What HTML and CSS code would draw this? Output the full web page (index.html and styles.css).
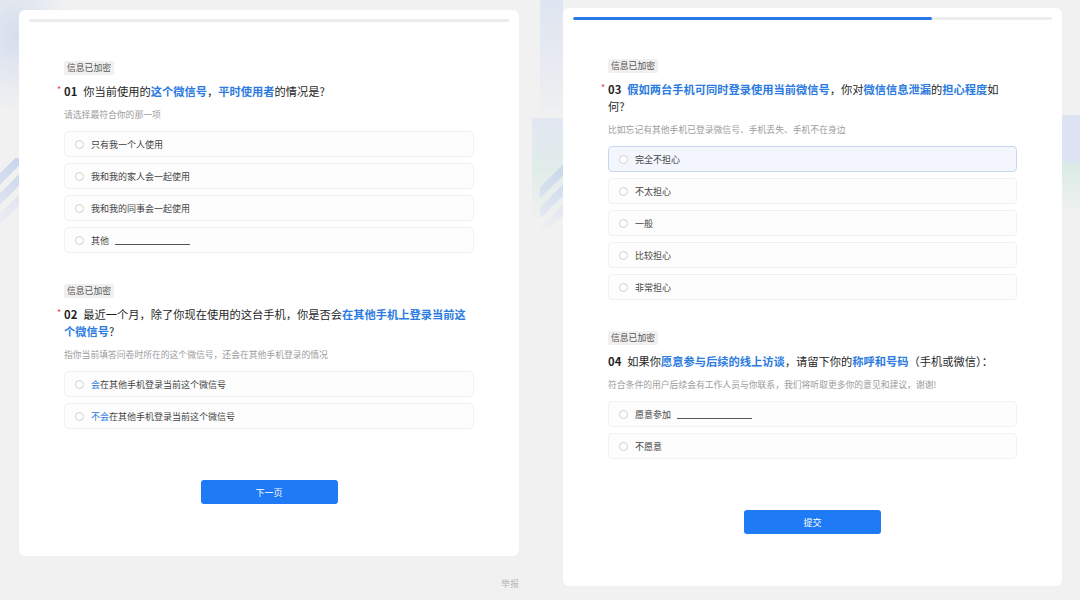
FILE: index.html
```html
<!DOCTYPE html>
<html lang="zh-CN">
<head>
<meta charset="utf-8">
<title>问卷</title>
<link rel="stylesheet" href="styles.css">
</head>
<body>
<div class="screen">
  <section class="panel panel-left">
    <div class="decor decor-glow"></div>
    <div class="decor decor-stripes decor-stripes-left"><i></i><i></i><i></i></div>
    <div class="card">
      <div class="progress"><div class="progress-fill progress-fill-0"></div></div>
      <div class="content">
        <div class="question">
          <span class="tag">信息已加密</span>
          <div class="title"><span class="star">*</span><span class="num">01</span>你当前使用的<b class="hl">这个微信号</b>，<b class="hl">平时使用者</b>的情况是?</div>
          <div class="desc">请选择最符合你的那一项</div>
          <div class="options">
            <div class="option"><span class="radio"></span><span>只有我一个人使用</span></div>
            <div class="option"><span class="radio"></span><span>我和我的家人会一起使用</span></div>
            <div class="option"><span class="radio"></span><span>我和我的同事会一起使用</span></div>
            <div class="option"><span class="radio"></span><span>其他</span><span class="fill"></span></div>
          </div>
        </div>
        <div class="question">
          <span class="tag">信息已加密</span>
          <div class="title"><span class="star">*</span><span class="num">02</span>最近一个月，除了你现在使用的这台手机，你是否会<b class="hl">在其他手机上登录当前这个微信号</b>?</div>
          <div class="desc">指你当前填答问卷时所在的这个微信号，还会在其他手机登录的情况</div>
          <div class="options">
            <div class="option"><span class="radio"></span><span><span class="hl-soft">会</span>在其他手机登录当前这个微信号</span></div>
            <div class="option"><span class="radio"></span><span><span class="hl-soft">不会</span>在其他手机登录当前这个微信号</span></div>
          </div>
        </div>
        <div class="actions"><button class="btn">下一页</button></div>
      </div>
    </div>
    <div class="report">举报</div>
  </section>

  <section class="panel panel-right">
    <div class="decor decor-column"></div>
    <div class="decor decor-block"></div>
    <div class="decor decor-stripes decor-stripes-mid"><i></i><i></i><i></i></div>
    <div class="decor decor-edge"></div>
    <div class="card card-right">
      <div class="progress"><div class="progress-fill progress-fill-75"></div></div>
      <div class="content">
        <div class="question">
          <span class="tag">信息已加密</span>
          <div class="title"><span class="star">*</span><span class="num">03</span><b class="hl">假如两台手机可同时登录使用当前微信号</b>，你对<b class="hl">微信信息泄漏</b>的<b class="hl">担心程度</b>如何?</div>
          <div class="desc">比如忘记有其他手机已登录微信号、手机丢失、手机不在身边</div>
          <div class="options">
            <div class="option option-active"><span class="radio"></span><span>完全不担心</span></div>
            <div class="option"><span class="radio"></span><span>不太担心</span></div>
            <div class="option"><span class="radio"></span><span>一般</span></div>
            <div class="option"><span class="radio"></span><span>比较担心</span></div>
            <div class="option"><span class="radio"></span><span>非常担心</span></div>
          </div>
        </div>
        <div class="question">
          <span class="tag">信息已加密</span>
          <div class="title"><span class="num">04</span>如果你<b class="hl">愿意参与后续的线上访谈</b>，请留下你的<b class="hl">称呼和号码</b>（手机或微信）：</div>
          <div class="desc">符合条件的用户后续会有工作人员与你联系，我们将听取更多你的意见和建议，谢谢!</div>
          <div class="options">
            <div class="option"><span class="radio"></span><span>愿意参加</span><span class="fill"></span></div>
            <div class="option"><span class="radio"></span><span>不愿意</span></div>
          </div>
        </div>
        <div class="actions"><button class="btn">提交</button></div>
      </div>
    </div>
  </section>
</div>
</body>
</html>
```

FILE: styles.css
```css
* { box-sizing: border-box; }

html, body {
  margin: 0;
  padding: 0;
}

body {
  width: 1080px;
  height: 600px;
  overflow: hidden;
  background: #f1f1f1;
  font-family: "Noto Sans CJK SC", "Noto Sans", sans-serif;
  color: #1f1f1f;
}

.screen {
  display: flex;
  height: 600px;
}

.panel {
  position: relative;
  height: 600px;
}

.panel-left {
  width: 540px;
  padding: 10px 0 0 19px;
}

.panel-right {
  flex: 1;
  padding: 8px 0 0 23px;
}

/* background decoration */
.decor {
  position: absolute;
  pointer-events: none;
  z-index: 0;
}

.decor-glow {
  left: -40px;
  top: -40px;
  width: 110px;
  height: 150px;
  border-radius: 50%;
  background: radial-gradient(ellipse at center, rgba(205, 216, 236, 0.75) 0%, rgba(220, 228, 240, 0.4) 50%, rgba(241, 241, 241, 0) 75%);
}

.decor-stripes {
  width: 40px;
  height: 70px;
  overflow: hidden;
}

.decor-stripes i {
  position: absolute;
  width: 8px;
  height: 90px;
  border-radius: 4px;
  transform: rotate(45deg);
  background: linear-gradient(180deg, rgba(190, 206, 236, 0.9), rgba(220, 228, 244, 0.3));
}

.decor-stripes i:nth-child(1) { left: 6px; top: -20px; }
.decor-stripes i:nth-child(2) { left: 18px; top: -12px; }
.decor-stripes i:nth-child(3) { left: 30px; top: -4px; opacity: 0.6; }

.decor-stripes-left {
  left: -14px;
  top: 158px;
}

.decor-stripes-mid {
  left: 0px;
  top: 158px;
}

.decor-column {
  left: 0;
  top: 0;
  width: 23px;
  height: 110px;
  background: linear-gradient(180deg, rgba(218, 226, 240, 0.8), rgba(230, 234, 242, 0.3));
}

.decor-block {
  left: -8px;
  top: 118px;
  width: 31px;
  height: 100px;
  background: linear-gradient(180deg, rgba(222, 228, 242, 0.8) 0%, rgba(218, 234, 230, 0.7) 50%, rgba(236, 240, 240, 0.3) 100%);
}

.decor-edge {
  left: 522px;
  top: 115px;
  width: 18px;
  height: 95px;
  background: linear-gradient(180deg, rgba(221, 227, 244, 0.95) 0%, rgba(221, 227, 244, 0.95) 48%, rgba(216, 234, 230, 0.9) 52%, rgba(236, 240, 240, 0.4) 100%);
}

/* card */
.card {
  position: relative;
  z-index: 1;
  width: 500px;
  background: #ffffff;
  border-radius: 6px;
  padding: 9px 10px 52px;
}

.card-right {
  width: 499px;
}

.progress {
  height: 3px;
  background: #ececec;
  border-radius: 2px;
  overflow: hidden;
}

.progress-fill {
  height: 3px;
  background: #2a78e4;
  border-radius: 2px;
}

.progress-fill-0 { width: 0; }
.progress-fill-75 { width: 75%; }

.content {
  padding: 39px 35px 0;
}

.question + .question {
  margin-top: 31px;
}

.tag {
  display: block;
  width: fit-content;
  height: 14px;
  line-height: 14px;
  padding: 0 3px;
  font-size: 8.8px;
  color: #555555;
  background: #f0f0f0;
  border-radius: 2px;
}

.title {
  margin-top: 8px;
  padding-right: 5px;
  font-size: 11.25px;
  line-height: 17px;
  color: #1f1f1f;
}

.star {
  display: inline-block;
  width: 7px;
  margin-left: -7px;
  color: #e2473f;
  font-size: 9px;
  line-height: 14px;
  vertical-align: top;
}

.num {
  font-weight: 700;
  margin-right: 6px;
}

.hl {
  color: #2b7be0;
  font-weight: 700;
}

.hl-soft {
  color: #2b7be0;
}

.desc {
  margin-top: 8px;
  font-size: 8.8px;
  line-height: 13px;
  color: #9c9c9c;
}

.options {
  margin-top: 10px;
  display: flex;
  flex-direction: column;
  gap: 6px;
}

.option {
  height: 26px;
  display: flex;
  align-items: center;
  padding-left: 10px;
  border: 1px solid #f1f1f1;
  border-radius: 4px;
  background: #fdfdfd;
  font-size: 9px;
  color: #444444;
}

.option-active {
  background: #f3f7fd;
  border-color: #c8d7ee;
}

.radio {
  width: 9px;
  height: 9px;
  border: 1px solid #d0d0d0;
  border-radius: 50%;
  background: #ffffff;
  margin-right: 7px;
  flex: none;
}

.fill {
  display: inline-block;
  width: 75px;
  height: 9px;
  margin-left: 6px;
  border-bottom: 1px solid #555555;
}

.actions {
  margin-top: 51px;
  display: flex;
  justify-content: center;
}

.btn {
  width: 137px;
  height: 24px;
  border: none;
  border-radius: 3px;
  background: #1f7bf5;
  color: #ffffff;
  font-family: "Noto Sans CJK SC", "Noto Sans", sans-serif;
  font-size: 9px;
  padding: 0;
}

.report {
  position: relative;
  z-index: 1;
  width: 500px;
  margin-top: 21px;
  text-align: right;
  font-size: 9px;
  line-height: 13px;
  color: #b8b8b8;
}
```
